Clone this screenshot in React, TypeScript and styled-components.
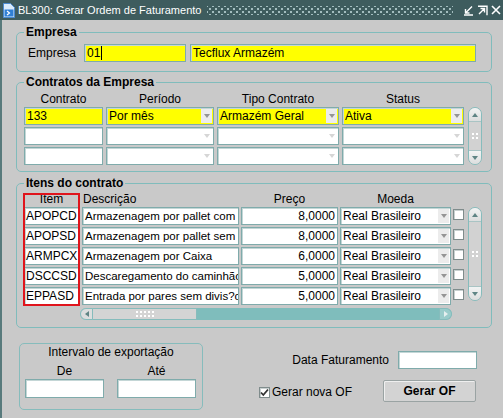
import styled, { createGlobalStyle } from 'styled-components';

const GlobalStyle = createGlobalStyle`
  html, body {
    margin: 0;
    padding: 0;
    background: #c9c9c9;
  }
  body {
    font-family: "Liberation Sans", Arial, sans-serif;
    font-size: 12px;
    color: #000;
  }
`;

const Window = styled.div`
  width: 503px;
  height: 418px;
  display: flex;
  flex-direction: column;
  background: #c9c9c9;
  overflow: hidden;
`;

const TitleBar = styled.div`
  height: 20px;
  flex: 0 0 20px;
  background: #3e5c5e;
  display: flex;
  align-items: center;
  padding: 0 2px 0 3px;
  box-sizing: border-box;
  color: #fff;
`;
const TitleText = styled.span`
  margin-left: 3px;
  font-size: 11px;
  white-space: nowrap;
`;
const Grip = styled.div`
  flex: 1;
  height: 9px;
  margin: 0 10px 0 6px;
  background-image: radial-gradient(circle, #a3bdbf 0.9px, transparent 1.3px),
    radial-gradient(circle, #a3bdbf 0.9px, transparent 1.3px);
  background-size: 6px 6px;
  background-position: 0 0, 3px 3px;
`;
const TitleButtons = styled.div`
  display: flex;
  gap: 3px;
  align-items: center;
`;

const Body = styled.div`
  flex: 1;
  border-left: 2px solid #587a7c;
  padding: 5px 11px 0 14px;
`;

const Frame = styled.fieldset<{ $mt?: number }>`
  margin: ${(p) => p.$mt ?? 0}px 0 0 0;
  padding: 0;
  min-width: 0;
  border: 1px solid #80bcbc;
  border-radius: 5px;
`;
const Legend = styled.legend`
  margin-left: 7px;
  padding: 0 2px;
  font-weight: bold;
  font-size: 12px;
  line-height: 14px;
`;

const EmpresaRow = styled.div`
  display: flex;
  align-items: center;
  gap: 4px;
  padding: 5px 0 9px 11px;
`;
const FieldLabel = styled.span<{ $w?: number }>`
  width: ${(p) => (p.$w ? `${p.$w}px` : 'auto')};
  font-size: 12px;
  white-space: nowrap;
`;

const Field = styled.div<{ $w: number; $h?: number; $current?: boolean; $right?: boolean; $fs?: number }>`
  width: ${(p) => p.$w}px;
  height: ${(p) => p.$h ?? 18}px;
  flex: 0 0 auto;
  box-sizing: border-box;
  background: ${(p) => (p.$current ? '#ffff00' : '#ffffff')};
  border: 1px solid #7fabab;
  box-shadow: inset 1px 1px 0 #c4d6d6;
  padding: ${(p) => (p.$right ? '0 2px 0 0' : '0 0 0 2px')};
  font-size: ${(p) => p.$fs ?? 12}px;
  line-height: ${(p) => (p.$h ?? 18) - 1}px;
  text-align: ${(p) => (p.$right ? 'right' : 'left')};
  white-space: nowrap;
  overflow: hidden;
`;
const Caret = styled.span`
  display: inline-block;
  width: 1px;
  height: 14px;
  margin-left: 1px;
  background: #000;
  vertical-align: -3px;
`;

const Combo = styled(Field)`
  display: flex;
  padding-right: 0;
`;
const ComboText = styled.span`
  flex: 1;
  overflow: hidden;
`;
const ComboArrow = styled.span<{ $dim?: boolean }>`
  flex: 0 0 11px;
  margin: 1px 1px 1px 0;
  background: ${(p) => (p.$dim ? '#ffffff' : '#ececec')};
  display: flex;
  align-items: center;
  justify-content: center;
  &::after {
    content: '';
    border-left: 3.5px solid transparent;
    border-right: 3.5px solid transparent;
    border-top: 4px solid ${(p) => (p.$dim ? '#d6d6d6' : '#959595')};
  }
`;

/* Contratos */
const ContratosBody = styled.div`
  padding: 3px 0 6px 7px;
`;
const HeadRow = styled.div`
  display: flex;
  gap: 3px;
  height: 15px;
  line-height: 15px;
`;
const HeadCell = styled.div<{ $w: number; $left?: boolean }>`
  width: ${(p) => p.$w}px;
  text-align: ${(p) => (p.$left ? 'left' : 'center')};
  padding-left: ${(p) => (p.$left ? '1px' : '0')};
  box-sizing: border-box;
  font-size: 12px;
  white-space: nowrap;
`;
const GridBody = styled.div`
  display: flex;
  align-items: flex-start;
`;
const Rows = styled.div`
  display: flex;
  flex-direction: column;
  gap: 2px;
`;
const Row = styled.div`
  display: flex;
  gap: 3px;
`;

/* Scrollbars */
const VScroll = styled.div<{ $h: number; $mt?: number; $ml?: number }>`
  width: 14px;
  height: ${(p) => p.$h}px;
  margin: ${(p) => p.$mt ?? 0}px 0 0 ${(p) => p.$ml ?? 4}px;
  box-sizing: border-box;
  border: 1px solid #86bcbc;
  border-radius: 7px;
  background: #d2d2d2;
  display: flex;
  flex-direction: column;
  justify-content: space-between;
  align-items: center;
  overflow: hidden;
`;
const VCap = styled.div<{ $down?: boolean }>`
  width: 12px;
  height: 13px;
  background: linear-gradient(#f2f4f4, #dcdede);
  border-${(p) => (p.$down ? 'top' : 'bottom')}: 1px solid #a9c4c4;
  display: flex;
  align-items: center;
  justify-content: center;
  &::after {
    content: '';
    border-left: 3.5px solid transparent;
    border-right: 3.5px solid transparent;
    ${(p) => (p.$down ? 'border-top' : 'border-bottom')}: 4px solid #5f8585;
  }
`;
const GripDots = styled.div<{ $w: number; $h: number }>`
  width: ${(p) => p.$w}px;
  height: ${(p) => p.$h}px;
  background-image: radial-gradient(circle, #ffffff 0.9px, transparent 1.2px);
  background-size: 4px 4px;
`;

const HScroll = styled.div`
  margin: 3px 0 0 56px;
  width: 372px;
  height: 12px;
  display: flex;
  background: #7fbdbc;
  border-radius: 6px;
  overflow: hidden;
`;
const HCap = styled.div<{ $right?: boolean }>`
  width: 13px;
  box-sizing: border-box;
  background: ${(p) => (p.$right ? '#9acccb' : '#dcdede')};
  border: 1px solid #86bcbc;
  border-radius: ${(p) => (p.$right ? '0 6px 6px 0' : '6px 0 0 6px')};
  display: flex;
  align-items: center;
  justify-content: center;
  &::after {
    content: '';
    border-top: 3.5px solid transparent;
    border-bottom: 3.5px solid transparent;
    ${(p) => (p.$right ? 'border-left' : 'border-right')}: 4px solid ${(p) => (p.$right ? '#e6f0f0' : '#5f8585')};
  }
`;
const HThumb = styled.div`
  width: 104px;
  box-sizing: border-box;
  background: #d4d4d4;
  border: 1px solid #86bcbc;
  border-left: none;
  display: flex;
  align-items: center;
  justify-content: center;
`;
const HTrack = styled.div`
  flex: 1;
  display: flex;
  justify-content: flex-end;
`;

/* Itens */
const ItensBody = styled.div`
  padding: 4px 0 7px 7px;
`;
const ItensGrid = styled.div`
  display: flex;
  align-items: flex-start;
`;
const Column = styled.div<{ $gapAfter?: number; $marked?: boolean }>`
  display: flex;
  flex-direction: column;
  gap: 2px;
  margin-right: ${(p) => p.$gapAfter ?? 0}px;
  outline: ${(p) => (p.$marked ? '2px solid #e0141c' : 'none')};
  outline-offset: -1px;
`;
const ColHead = styled.div<{ $left?: boolean }>`
  height: 11px;
  line-height: 11px;
  font-size: 12px;
  text-align: ${(p) => (p.$left ? 'left' : 'center')};
  padding-left: ${(p) => (p.$left ? '1px' : '0')};
  white-space: nowrap;
`;
const CheckCell = styled.div`
  height: 18px;
  padding-top: 2px;
  box-sizing: border-box;
`;
const Check = styled.div<{ $size?: number }>`
  width: ${(p) => p.$size ?? 11}px;
  height: ${(p) => p.$size ?? 11}px;
  box-sizing: border-box;
  background: #fff;
  border: 1px solid #7f8c8c;
  box-shadow: inset 1px 1px 0 #c8d0d0;
  display: flex;
  align-items: center;
  justify-content: center;
`;

/* Bottom */
const Bottom = styled.div`
  display: flex;
  align-items: flex-start;
  margin-top: 15px;
`;
const IntervalBox = styled.div`
  margin-left: 3px;
  width: 184px;
  height: 67px;
  box-sizing: border-box;
  border: 1px solid #86bcbc;
  border-radius: 5px;
  padding: 1px 0 0 5px;
`;
const IntervalTitle = styled.div`
  text-align: center;
  margin-left: -5px;
  line-height: 14px;
  font-size: 12px;
`;
const DateCols = styled.div`
  display: flex;
  gap: 13px;
  margin-top: 5px;
`;
const DateCol = styled.div`
  display: flex;
  flex-direction: column;
  align-items: center;
  gap: 1px;
`;
const RightPane = styled.div`
  flex: 1;
  display: flex;
  flex-direction: column;
  align-items: flex-end;
  padding: 8px 16px 0 0;
`;
const DataRow = styled.div`
  display: flex;
  align-items: center;
  gap: 9px;
  margin-right: -1px;
`;
const ActionRow = styled.div`
  display: flex;
  align-items: center;
  margin-top: 11px;
`;
const CheckLabel = styled.label`
  display: flex;
  align-items: center;
  gap: 2px;
  margin-right: 31px;
  margin-top: 2px;
  font-size: 12px;
`;
const Button = styled.button`
  width: 93px;
  height: 22px;
  font-family: "Liberation Sans", Arial, sans-serif;
  font-weight: bold;
  font-size: 12px;
  background: #d3d3d3;
  border: 1px solid #9aa3a3;
  border-radius: 2px;
  box-shadow: inset 1px 1px 0 #efefef;
  padding: 0;
  color: #000;
`;

const contratos = [
  { contrato: '133', periodo: 'Por mês', tipo: 'Armazém Geral', status: 'Ativa', current: true },
  { contrato: '', periodo: '', tipo: '', status: '', current: false },
  { contrato: '', periodo: '', tipo: '', status: '', current: false },
];

const itens = [
  { code: 'APOPCD', desc: 'Armazenagem por pallet com', price: '8,0000' },
  { code: 'APOPSD', desc: 'Armazenagem por pallet sem', price: '8,0000' },
  { code: 'ARMPCX', desc: 'Armazenagem por Caixa', price: '6,0000' },
  { code: 'DSCCSD', desc: 'Descaregamento do caminhão', price: '5,0000' },
  { code: 'EPPASD', desc: 'Entrada por pares sem divis?o', price: '5,0000' },
];

function DocIcon() {
  return (
    <svg width="12" height="15" viewBox="0 0 12 15">
      <path d="M0.5 0.5h7l4 4v10h-11z" fill="#d9ebfb" stroke="#4a8ad0" />
      <rect x="1.5" y="6.5" width="9" height="7" fill="#2f7fd4" />
      <path d="M4 8l2.5 2-2.5 2" stroke="#fff" strokeWidth="1.2" fill="none" />
    </svg>
  );
}

function WinButtons() {
  return (
    <TitleButtons>
      <svg width="11" height="11" viewBox="0 0 11 11">
        <path d="M9 1.5L3 7.5M2.5 4v4h4M1 10h9" stroke="#fff" strokeWidth="1.4" fill="none" />
      </svg>
      <svg width="11" height="11" viewBox="0 0 11 11">
        <path d="M1 1.2h9v9M2 9l5.5-5.5M3.5 3.5h4v4" stroke="#fff" strokeWidth="1.4" fill="none" />
      </svg>
      <svg width="10" height="10" viewBox="0 0 10 10">
        <path d="M1 1l8 8M9 1l-8 8" stroke="#fff" strokeWidth="1.6" fill="none" />
      </svg>
    </TitleButtons>
  );
}

function ComboField({ w, text, current }: { w: number; text: string; current?: boolean }) {
  return (
    <Combo $w={w} $current={current}>
      <ComboText>{text}</ComboText>
      <ComboArrow $dim={!text} />
    </Combo>
  );
}

function VScrollBar({ h, mt, ml }: { h: number; mt?: number; ml?: number }) {
  return (
    <VScroll $h={h} $mt={mt} $ml={ml}>
      <VCap />
      <GripDots $w={8} $h={8} />
      <VCap $down />
    </VScroll>
  );
}

function TickBox() {
  return (
    <Check $size={11}>
      <svg width="9" height="9" viewBox="0 0 9 9">
        <path d="M1 4.5l2.3 2.5L8 1.5" stroke="#333" strokeWidth="1.8" fill="none" />
      </svg>
    </Check>
  );
}

export default function App() {
  return (
    <>
      <GlobalStyle />
      <Window>
        <TitleBar>
          <DocIcon />
          <TitleText>BL300: Gerar Ordem de Faturamento</TitleText>
          <Grip />
          <WinButtons />
        </TitleBar>
        <Body>
          <Frame>
            <Legend>Empresa</Legend>
            <EmpresaRow>
              <FieldLabel $w={52}>Empresa</FieldLabel>
              <Field $w={102} $current>
                01
                <Caret />
              </Field>
              <Field $w={286} $current>
                Tecflux Armazém
              </Field>
            </EmpresaRow>
          </Frame>

          <Frame $mt={3}>
            <Legend>Contratos da Empresa</Legend>
            <ContratosBody>
              <HeadRow>
                <HeadCell $w={79}>Contrato</HeadCell>
                <HeadCell $w={108}>Período</HeadCell>
                <HeadCell $w={122}>Tipo Contrato</HeadCell>
                <HeadCell $w={122}>Status</HeadCell>
              </HeadRow>
              <GridBody>
                <Rows>
                  {contratos.map((c, i) => (
                    <Row key={i}>
                      <Field $w={79} $current={c.current}>
                        {c.contrato}
                      </Field>
                      <ComboField w={108} text={c.periodo} current={c.current} />
                      <ComboField w={122} text={c.tipo} current={c.current} />
                      <ComboField w={122} text={c.status} current={c.current} />
                    </Row>
                  ))}
                </Rows>
                <VScrollBar h={58} ml={4} />
              </GridBody>
            </ContratosBody>
          </Frame>

          <Frame $mt={4}>
            <Legend>Itens do contrato</Legend>
            <ItensBody>
              <ItensGrid>
                <Column $gapAfter={3} $marked>
                  <ColHead>Item</ColHead>
                  {itens.map((it) => (
                    <Field key={it.code} $w={55} style={{ paddingLeft: 1 }}>
                      {it.code}
                    </Field>
                  ))}
                </Column>
                <Column $gapAfter={2}>
                  <ColHead $left>Descrição</ColHead>
                  {itens.map((it) => (
                    <Field key={it.code} $w={157} $fs={11.5}>
                      {it.desc}
                    </Field>
                  ))}
                </Column>
                <Column $gapAfter={2}>
                  <ColHead>Preço</ColHead>
                  {itens.map((it) => (
                    <Field key={it.code} $w={97} $right>
                      {it.price}
                    </Field>
                  ))}
                </Column>
                <Column $gapAfter={2}>
                  <ColHead>Moeda</ColHead>
                  {itens.map((it) => (
                    <ComboField key={it.code} w={111} text="Real Brasileiro" />
                  ))}
                </Column>
                <Column>
                  <ColHead />
                  {itens.map((it) => (
                    <CheckCell key={it.code}>
                      <Check />
                    </CheckCell>
                  ))}
                </Column>
                <VScrollBar h={94} mt={13} ml={4} />
              </ItensGrid>
              <HScroll>
                <HCap />
                <HThumb>
                  <GripDots $w={20} $h={8} />
                </HThumb>
                <HTrack>
                  <HCap $right />
                </HTrack>
              </HScroll>
            </ItensBody>
          </Frame>

          <Bottom>
            <IntervalBox>
              <IntervalTitle>Intervalo de exportação</IntervalTitle>
              <DateCols>
                <DateCol>
                  <FieldLabel>De</FieldLabel>
                  <Field $w={79} $h={19} />
                </DateCol>
                <DateCol>
                  <FieldLabel>Até</FieldLabel>
                  <Field $w={79} $h={19} />
                </DateCol>
              </DateCols>
            </IntervalBox>
            <RightPane>
              <DataRow>
                <FieldLabel>Data Faturamento</FieldLabel>
                <Field $w={79} />
              </DataRow>
              <ActionRow>
                <CheckLabel>
                  <TickBox />
                  Gerar nova OF
                </CheckLabel>
                <Button>Gerar OF</Button>
              </ActionRow>
            </RightPane>
          </Bottom>
        </Body>
      </Window>
    </>
  );
}
